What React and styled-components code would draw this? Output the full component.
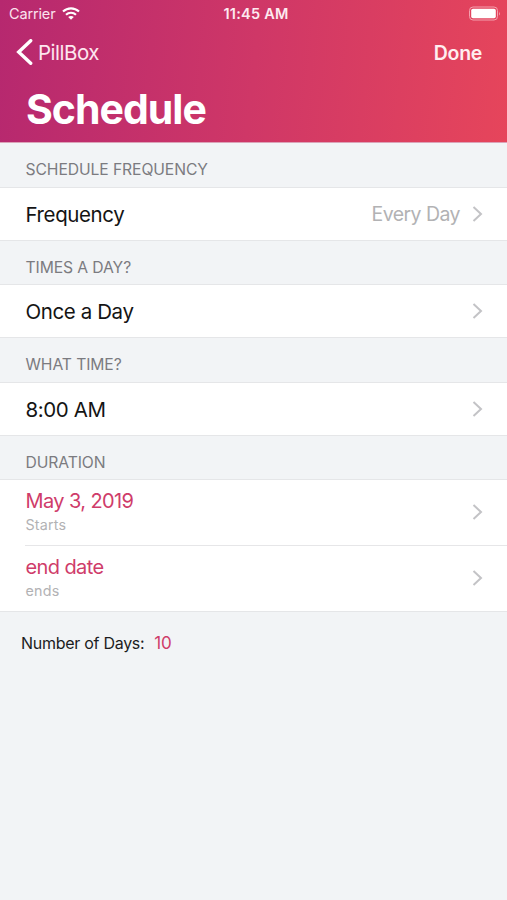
import styled, { createGlobalStyle } from 'styled-components';

const GlobalStyle = createGlobalStyle`
  * {
    box-sizing: border-box;
  }

  body {
    margin: 0;
    background-color: #f2f4f6;
    font-family: Inter, 'Liberation Sans', sans-serif;
  }
`;

const Screen = styled.div`
  display: flex;
  flex-direction: column;
  width: 507px;
  height: 900px;
  overflow: hidden;
  background-color: #f2f4f6;
  white-space: nowrap;
`;

const Header = styled.header`
  height: 143px;
  border-bottom: 1px solid #dba3b8;
  background: linear-gradient(96deg, #b6286f 0%, #cf3767 50%, #e6455b 100%);
  color: #fff;
`;

const StatusBar = styled.div`
  display: grid;
  grid-template-columns: 1fr auto 1fr;
  align-items: center;
  height: 27px;
  padding: 0 6px 0 9px;
  line-height: 27px;
`;

const Carrier = styled.div`
  display: flex;
  align-items: center;
  gap: 7px;
  font-size: 14.5px;
  letter-spacing: -0.15px;
  color: #fbe3ee;
`;

const Clock = styled.span`
  padding-left: 2px;
  font-size: 14.5px;
  font-weight: 600;
  letter-spacing: 0.25px;
  color: #fdeaf0;
`;

const BatteryIcon = styled.svg`
  display: block;
  justify-self: end;
`;

const NavBar = styled.div`
  display: flex;
  justify-content: space-between;
  align-items: center;
  height: 50px;
  padding: 0 25px 0 16px;
`;

const BackButton = styled.div`
  display: flex;
  align-items: center;
  gap: 5px;
  font-size: 20.5px;
  letter-spacing: -0.5px;
  color: #fde6ef;
`;

const DoneButton = styled.span`
  padding-top: 2px;
  font-size: 19.5px;
  font-weight: 600;
  letter-spacing: -0.3px;
  color: #ffedf0;
`;

const Title = styled.h1`
  margin: 0;
  padding: 7px 0 0 26px;
  font-size: 41px;
  font-weight: 700;
  line-height: 50px;
  letter-spacing: -1px;
`;

const SectionTitle = styled.h2`
  flex: none;
  height: ${({ $height }) => $height}px;
  margin: 0;
  padding-left: 25.5px;
  font-size: 15.7px;
  font-weight: 400;
  line-height: 53px;
  letter-spacing: -0.1px;
  color: #7b7b80;
`;

const Group = styled.div`
  flex: none;
  background-color: #fff;
  border-top: 1px solid #e5e6e8;
  border-bottom: 1px solid #e5e6e8;
`;

const Row = styled.div`
  display: flex;
  align-items: center;
  height: ${({ $height }) => $height || 52}px;
  margin-left: 25px;
  padding-right: 24px;

  & + & {
    border-top: 1px solid #e6e6e8;
  }
`;

const Label = styled.span`
  flex: 1;
  padding-left: 0.5px;
  font-size: 20.5px;
  letter-spacing: -0.4px;
  color: #141414;
`;

const Value = styled.span`
  margin-right: 12px;
  font-size: 19.5px;
  letter-spacing: -0.55px;
  color: #b2b2b4;
`;

const DateRow = styled(Row)`
  padding-bottom: 1px;
`;

const DateInfo = styled.div`
  flex: 1;
  padding-left: 0.5px;
`;

const DateLabel = styled.div`
  font-size: 20px;
  line-height: 25px;
  letter-spacing: -0.6px;
  color: #cf3c6a;
`;

const DateHint = styled.div`
  padding-top: 1px;
  font-size: 14.3px;
  line-height: 20px;
  letter-spacing: 0.2px;
  color: #b2b2b4;
`;

const Summary = styled.div`
  display: flex;
  align-items: center;
  gap: 10px;
  height: 62px;
  padding-left: 21px;
  font-size: 16px;
  letter-spacing: -0.28px;
  color: #1c1c1e;
`;

const DayCount = styled.span`
  font-size: 17px;
  letter-spacing: -0.2px;
  color: #cf3c6a;
`;

const WifiIcon = () => (
  <svg width="18" height="13" viewBox="0 0 18 13" fill="none" stroke="#fff" strokeWidth="2.1">
    <path d="M1 4.6C5.5 0.3 12.5 0.3 17 4.6" />
    <path d="M4 7.8C6.8 5.1 11.2 5.1 14 7.8" />
    <path d="M6.2 10C7.8 8.5 10.2 8.5 11.8 10L9 12.8Z" fill="#fff" stroke="none" />
  </svg>
);

const Battery = () => (
  <BatteryIcon width="33" height="15" viewBox="0 0 33 15">
    <rect x="1.5" y="1" width="28" height="13" rx="3.5" fill="none" stroke="#f4a0ae" />
    <rect x="3.2" y="2.8" width="24.6" height="9.4" rx="1.8" fill="#fff" />
    <path d="M31 5.5Q32.7 7.5 31 9.5Z" fill="#f4a0ae" />
  </BatteryIcon>
);

const BackIcon = () => (
  <svg width="17" height="26" viewBox="0 0 17 26" fill="none" stroke="#fff" strokeWidth="3.4">
    <path d="M14.7 1.7L2.7 13L14.7 24.3" strokeLinecap="round" />
  </svg>
);

const ChevronIcon = () => (
  <svg width="11" height="16" viewBox="0 0 11 16" fill="none" stroke="#c3c3c6" strokeWidth="2">
    <path d="M1.5 1L9 8L1.5 15" />
  </svg>
);

const App = () => {
  return (
    <>
      <GlobalStyle />
      <Screen>
        <Header>
          <StatusBar>
            <Carrier>
              <span>Carrier</span>
              <WifiIcon />
            </Carrier>
            <Clock>11:45 AM</Clock>
            <Battery />
          </StatusBar>
          <NavBar>
            <BackButton>
              <BackIcon />
              <span>PillBox</span>
            </BackButton>
            <DoneButton>Done</DoneButton>
          </NavBar>
          <Title>Schedule</Title>
        </Header>

        <SectionTitle $height={44}>SCHEDULE FREQUENCY</SectionTitle>
        <Group>
          <Row>
            <Label>Frequency</Label>
            <Value>Every Day</Value>
            <ChevronIcon />
          </Row>
        </Group>

        <SectionTitle $height={43}>TIMES A DAY?</SectionTitle>
        <Group>
          <Row>
            <Label>Once a Day</Label>
            <ChevronIcon />
          </Row>
        </Group>

        <SectionTitle $height={44}>WHAT TIME?</SectionTitle>
        <Group>
          <Row>
            <Label>8:00 AM</Label>
            <ChevronIcon />
          </Row>
        </Group>

        <SectionTitle $height={43}>DURATION</SectionTitle>
        <Group>
          <DateRow $height={65}>
            <DateInfo>
              <DateLabel>May 3, 2019</DateLabel>
              <DateHint>Starts</DateHint>
            </DateInfo>
            <ChevronIcon />
          </DateRow>
          <DateRow $height={66}>
            <DateInfo>
              <DateLabel>end date</DateLabel>
              <DateHint>ends</DateHint>
            </DateInfo>
            <ChevronIcon />
          </DateRow>
        </Group>

        <Summary>
          <span>Number of Days:</span>
          <DayCount>10</DayCount>
        </Summary>
      </Screen>
    </>
  );
};

export default App;
